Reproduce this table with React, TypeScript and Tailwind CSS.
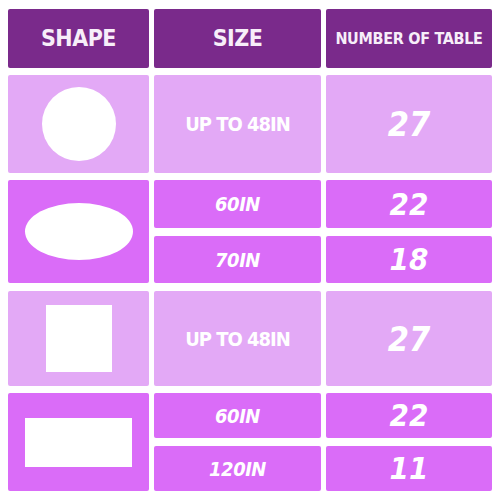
const font = { fontFamily: '"DejaVu Sans", "Liberation Sans", Arial, sans-serif' };

const Cell = ({ className = '', children }: { className?: string; children?: React.ReactNode }) => (
    <div className={`flex items-center justify-center rounded-[2px] ${className}`}>{children}</div>
);

const SizeText = ({ children }: { children: React.ReactNode }) => (
    <span className="text-[20px] font-bold italic font-stretch-condensed tracking-[-0.5px] text-white">{children}</span>
);

const Count = ({ children, size = 'text-[31px]' }: { children: React.ReactNode; size?: string }) => (
    <span className={`${size} font-bold italic font-stretch-condensed text-white leading-none`}>{children}</span>
);

export default function App() {
    return (
        <div className="w-[500px] h-[500px] bg-white pt-[9px] pl-[8px] flex flex-col gap-[7px]" style={font}>
            {/* Header */}
            <div className="flex gap-[5px] h-[59px]">
                <Cell className="w-[141px] bg-[#7a2a8b]">
                    <span className="text-[23px] font-bold font-stretch-condensed tracking-[-0.5px] text-[#f7eef9]">SHAPE</span>
                </Cell>
                <Cell className="w-[167px] bg-[#7a2a8b]">
                    <span className="text-[23px] font-bold font-stretch-condensed tracking-[-0.5px] text-[#f7eef9]">SIZE</span>
                </Cell>
                <Cell className="w-[166px] bg-[#7a2a8b]">
                    <span className="text-[16px] font-bold font-stretch-condensed tracking-[-0.3px] text-[#f7eef9]">NUMBER OF TABLE</span>
                </Cell>
            </div>

            {/* Round */}
            <div className="flex gap-[5px] h-[98px]">
                <Cell className="w-[141px] bg-[#e3a9f6]">
                    <div className="w-[74px] h-[74px] rounded-full bg-white" />
                </Cell>
                <Cell className="w-[167px] bg-[#e3a9f6]">
                    <span className="text-[20px] font-bold font-stretch-condensed tracking-[-1px] text-white">UP TO 48IN</span>
                </Cell>
                <Cell className="w-[166px] bg-[#e3a9f6]">
                    <Count size="text-[34px]">27</Count>
                </Cell>
            </div>

            {/* Oval */}
            <div className="flex gap-[5px] h-[103px]">
                <Cell className="w-[141px] bg-[#da6cf8]">
                    <div className="w-[108px] h-[57px] rounded-[50%] bg-white" />
                </Cell>
                <div className="w-[167px] flex flex-col gap-[8px]">
                    <Cell className="h-[48px] bg-[#da6cf8]"><SizeText>60IN</SizeText></Cell>
                    <Cell className="h-[47px] bg-[#da6cf8]"><SizeText>70IN</SizeText></Cell>
                </div>
                <div className="w-[166px] flex flex-col gap-[8px]">
                    <Cell className="h-[48px] bg-[#da6cf8]"><Count>22</Count></Cell>
                    <Cell className="h-[47px] bg-[#da6cf8]"><Count>18</Count></Cell>
                </div>
            </div>

            {/* Square */}
            <div className="flex gap-[5px] h-[95px] mt-[1px]">
                <Cell className="w-[141px] bg-[#e3a9f6]">
                    <div className="w-[66px] h-[67px] bg-white" />
                </Cell>
                <Cell className="w-[167px] bg-[#e3a9f6]">
                    <span className="text-[20px] font-bold font-stretch-condensed tracking-[-1px] text-white">UP TO 48IN</span>
                </Cell>
                <Cell className="w-[166px] bg-[#e3a9f6]">
                    <Count size="text-[34px]">27</Count>
                </Cell>
            </div>

            {/* Rectangle */}
            <div className="flex gap-[5px] h-[98px]">
                <Cell className="w-[141px] bg-[#da6cf8]">
                    <div className="w-[107px] h-[49px] bg-white" />
                </Cell>
                <div className="w-[167px] flex flex-col gap-[8px]">
                    <Cell className="h-[45px] bg-[#da6cf8]"><SizeText>60IN</SizeText></Cell>
                    <Cell className="h-[45px] bg-[#da6cf8]"><SizeText>120IN</SizeText></Cell>
                </div>
                <div className="w-[166px] flex flex-col gap-[8px]">
                    <Cell className="h-[45px] bg-[#da6cf8]"><Count>22</Count></Cell>
                    <Cell className="h-[45px] bg-[#da6cf8]"><Count>11</Count></Cell>
                </div>
            </div>
        </div>
    );
}
